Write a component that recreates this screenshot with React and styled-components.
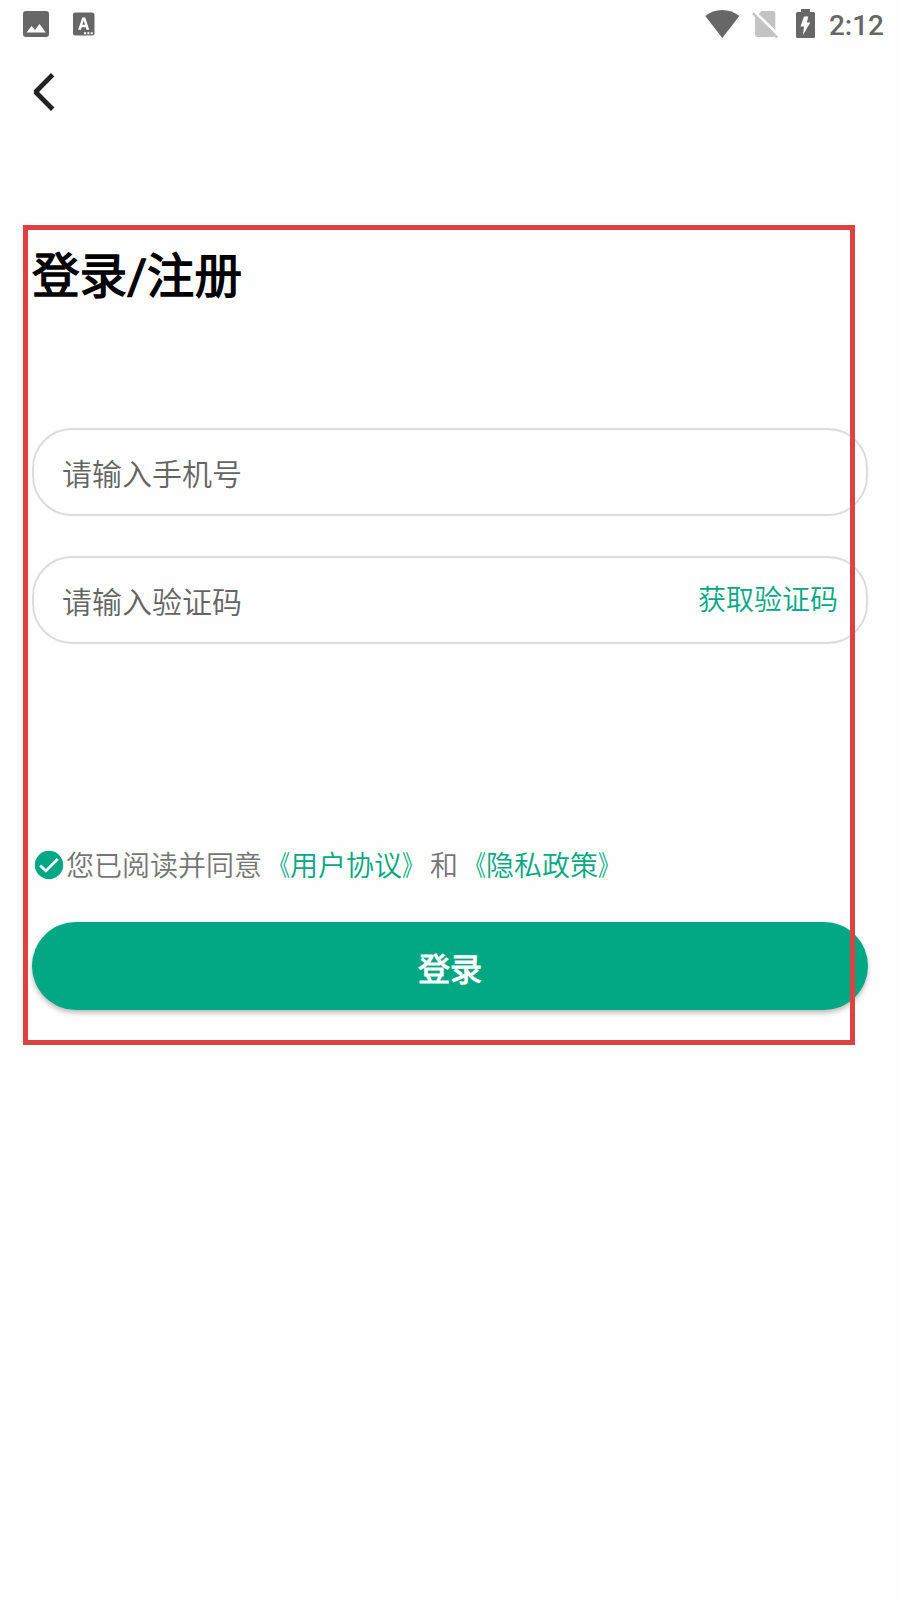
/*
 * LoginPage
 *
 * Phone number + verification code sign in screen
 */

import React, { useState } from 'react';
import styled, { createGlobalStyle } from 'styled-components';

const GlobalStyle = createGlobalStyle`
  * {
    box-sizing: border-box;
  }

  body {
    margin: 0;
    background: #fefefe;
    font-family: Roboto, 'Noto Sans CJK SC', sans-serif;
  }
`;

const Wrapper = styled.div`
  width: 900px;
  height: 1600px;
  overflow: hidden;

  display: flex;
  flex-direction: column;
`;

const StatusBar = styled.header`
  height: 48px;
  padding: 0 16px 0 23px;

  display: flex;
  justify-content: space-between;
`;

const StatusGroup = styled.div`
  display: flex;
  align-items: center;
  gap: ${props => props.$gap || 0}px;

  svg {
    display: block;
  }
`;

const Clock = styled.span`
  margin-left: 1px;
  padding-top: 3px;
  font-size: 28px;
  font-weight: 500;
  line-height: 45px;
  color: #676767;
`;

const NavBar = styled.nav`
  height: 88px;
  padding-left: 32px;

  display: flex;
  align-items: center;
`;

const BackButton = styled.button`
  padding: 0;
  border: none;
  background: none;
  line-height: 0;
`;

const Main = styled.main`
  position: relative;
  padding: 101px 32px 0;

  display: flex;
  flex-direction: column;
`;

/* frame drawn over the form, the fields stick out on the right */
const Highlight = styled.div`
  position: absolute;
  top: 89px;
  left: 22.5px;
  width: 832.5px;
  height: 820px;
  border: 5px solid #de4141;
  pointer-events: none;
`;

const Title = styled.h1`
  margin: 0 0 113px;
  padding-top: 2px;
  height: 78px;
  font-size: 47.6px;
  font-weight: 400;
  line-height: 76px;
  -webkit-text-stroke: 1.3px #000;
  color: #000;
`;

const Field = styled.div`
  height: 88px;
  margin-bottom: 40px;
  padding: 0 28px;
  border: 2px solid #dcdcdc;
  border-radius: 40px;

  display: flex;
  align-items: center;
`;

const Input = styled.input`
  flex: 1;
  min-width: 0;
  height: 60px;
  padding: 5px 0 0;
  border: none;
  outline: none;
  background: transparent;
  font-family: inherit;
  font-size: 30px;
  font-weight: 350;
  color: #222;

  &::placeholder {
    color: #646464;
    opacity: 1;
  }
`;

const CodeButton = styled.button`
  padding: 1px 0 0;
  border: none;
  background: none;
  font-family: inherit;
  font-size: 28px;
  font-weight: 350;
  line-height: 40px;
  color: #02a883;
`;

const Agreement = styled.div`
  height: 44px;
  margin: 159px 0 35px;
  padding-left: 2px;

  display: flex;
  align-items: center;
`;

const AgreementText = styled.span`
  margin-left: 2px;
  padding-top: 4px;
  font-size: 28px;
  font-weight: 350;
  line-height: 44px;
  white-space: nowrap;
  color: #757575;
`;

const Link = styled.a`
  color: #02a883;
`;

/* narrower book title marks, kept close to the title */
const Mark = styled.span`
  display: inline-block;
  transform: scaleX(0.75);
  transform-origin: ${props => (props.$open ? 'right' : 'left')} center;
`;

const Check = styled.span`
  line-height: 0;
  cursor: pointer;
`;

const LoginButton = styled.button`
  height: 88px;
  padding: 2px 0 0;
  border: none;
  border-radius: 44px;
  background: #02a883;
  box-shadow: 0 3px 5px rgba(0, 0, 0, 0.26);
  font-family: inherit;
  font-size: 32px;
  font-weight: 400;
  -webkit-text-stroke: 1px #fff;
  color: #fff;
`;

const ImageIcon = () => (
  <svg width="26" height="26" viewBox="0 0 26 26">
    <rect width="26" height="26" rx="3" fill="#676767" />
    <path d="M3.5 21.5 L8.5 15 L12 19 L16.5 13 L22.8 21.5 Z" fill="#fff" />
  </svg>
);

const KeyboardIcon = () => (
  <svg width="22" height="24" viewBox="0 0 22 24">
    <rect y="0.5" width="21.5" height="23" rx="2.5" fill="#676767" />
    <path d="M5.2 17.8 L9.2 5.6 H12.2 L16.2 17.8 H13.5 L12.7 15.2 H8.7 L7.9 17.8 Z M9.4 12.8 H12 L10.7 8.6 Z" fill="#fff" fillRule="evenodd" />
    <path d="M11 20.2h2v2h-2z M14.3 20.2h2v2h-2z M17.7 20.2h2v2h-2z" fill="#fff" />
  </svg>
);

const WifiIcon = () => (
  <svg width="35" height="28" viewBox="0 0 35 28">
    <path d="M0.3 6 Q7.5 0 17.3 0 T34.3 6 L17.3 28 Z" fill="#676767" />
  </svg>
);

const NoSimIcon = () => (
  <svg width="28" height="29" viewBox="0 0 28 29">
    <path d="M9.5 1 H21 Q23.3 1 23.3 3.3 V24 Q23.3 27 20.5 27 H6 Q3 27 3 24 V7.5 Z" fill="#c3c3c3" />
    <path d="M2 1.4 L27 25.6" stroke="#fefefe" strokeWidth="3" />
    <path d="M0.8 3.2 L25.3 27.7" stroke="#c3c3c3" strokeWidth="2.4" />
  </svg>
);

const BatteryIcon = () => (
  <svg width="19" height="30" viewBox="0 0 19 30">
    <path d="M5 0 H14 V3 H17.5 Q19 3 19 4.5 V27.5 Q19 29 17.5 29 H1.5 Q0 29 0 27.5 V4.5 Q0 3 1.5 3 H5 Z" fill="#676767" />
    <path d="M8 7.5 H12.3 L10.8 13.5 H14.3 L7 26 L8 17.5 H4.5 Z" fill="#fff" />
  </svg>
);

const BackIcon = () => (
  <svg width="24" height="38" viewBox="0 0 24 38">
    <path d="M19 3.4 L3.6 19 L19 34.6" fill="none" stroke="#222" strokeWidth="4.8" strokeLinecap="square" strokeLinejoin="bevel" />
  </svg>
);

const CheckIcon = ({ checked }) => (
  <svg width="30" height="30" viewBox="0 0 30 30">
    <circle cx="15" cy="15" r={checked ? 14.2 : 13} fill={checked ? '#02a883' : 'none'} stroke={checked ? 'none' : '#757575'} strokeWidth="2" />
    {checked && (
      <path d="M6.2 15.4 L11.9 20.9 L23.8 9" fill="none" stroke="#fff" strokeWidth="2.8" />
    )}
  </svg>
);

const DocLink = ({ children }) => (
  <Link>
    <Mark $open>《</Mark>{children}<Mark>》</Mark>
  </Link>
);

export function LoginPage() {
  const [agreed, setAgreed] = useState(true);

  return (
    <Wrapper>
      <GlobalStyle />
      <StatusBar>
        <StatusGroup $gap={24}>
          <ImageIcon />
          <KeyboardIcon />
        </StatusGroup>
        <StatusGroup $gap={16}>
          <StatusGroup $gap={12}>
            <WifiIcon />
            <NoSimIcon />
          </StatusGroup>
          <StatusGroup $gap={13}>
            <BatteryIcon />
            <Clock>2:12</Clock>
          </StatusGroup>
        </StatusGroup>
      </StatusBar>

      <NavBar>
        <BackButton aria-label="返回">
          <BackIcon />
        </BackButton>
      </NavBar>

      <Main>
        <Title>登录/注册</Title>
        <Field>
          <Input type="tel" placeholder="请输入手机号" />
        </Field>
        <Field>
          <Input placeholder="请输入验证码" />
          <CodeButton>获取验证码</CodeButton>
        </Field>
        <Agreement>
          <Check onClick={() => setAgreed(!agreed)}>
            <CheckIcon checked={agreed} />
          </Check>
          <AgreementText>
            您已阅读并同意<DocLink>用户协议</DocLink>和<DocLink>隐私政策</DocLink>
          </AgreementText>
        </Agreement>
        <LoginButton>登录</LoginButton>
        <Highlight />
      </Main>
    </Wrapper>
  );
}

export default LoginPage;
